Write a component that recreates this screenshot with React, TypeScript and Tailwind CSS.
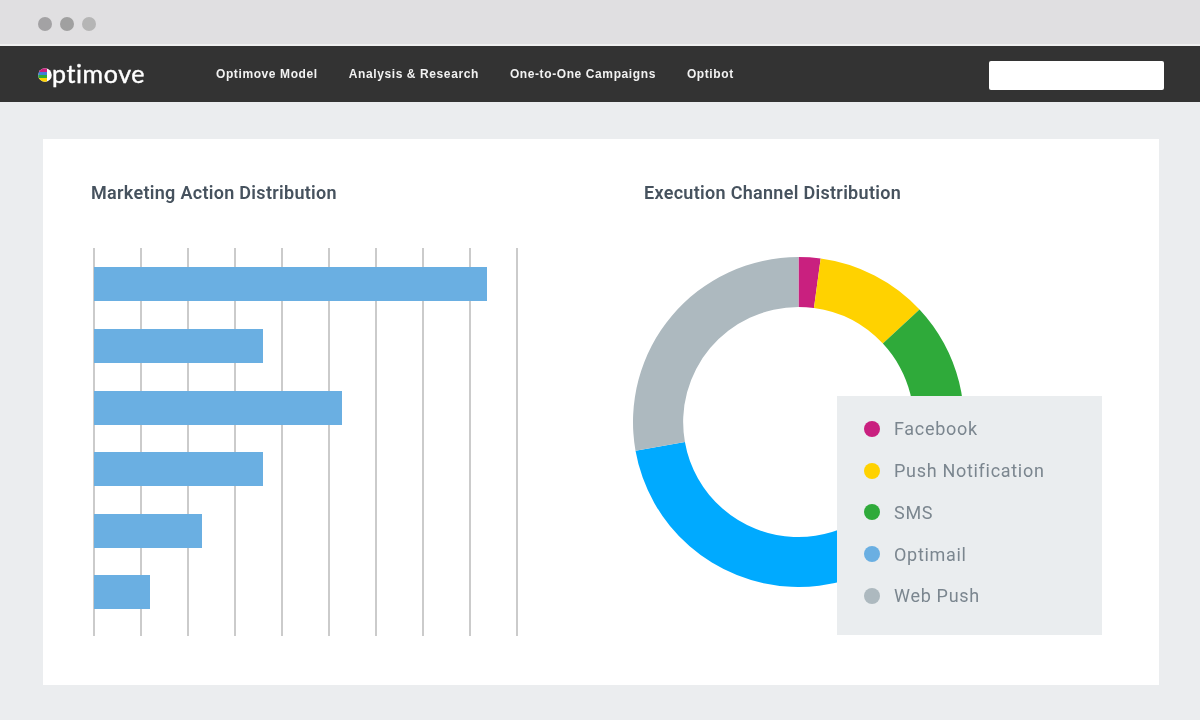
const NAV = ['Optimove Model', 'Analysis & Research', 'One-to-One Campaigns', 'Optibot']

const BARS = [393, 169, 248, 169, 108, 56]

const LEGEND = [
  { label: 'Facebook', color: 'bg-[#c9207f]' },
  { label: 'Push Notification', color: 'bg-[#ffd200]' },
  { label: 'SMS', color: 'bg-[#2faa3a]' },
  { label: 'Optimail', color: 'bg-[#6aafe2]' },
  { label: 'Web Push', color: 'bg-[#adb9bf]' },
]

const SLICES = [
  { from: 0, to: 7.7, fill: '#c9207f' },
  { from: 7.7, to: 47, fill: '#ffd200' },
  { from: 47, to: 105, fill: '#2faa3a' },
  { from: 105, to: 260, fill: '#00aaff' },
  { from: 260, to: 360, fill: '#adb9bf' },
]

function point(r: number, deg: number) {
  const a = (deg * Math.PI) / 180
  return `${165 + r * Math.sin(a)} ${165 - r * Math.cos(a)}`
}

function slicePath(from: number, to: number) {
  const large = to - from > 180 ? 1 : 0
  return `M${point(165, from)} A165 165 0 ${large} 1 ${point(165, to)} L${point(115, to)} A115 115 0 ${large} 0 ${point(115, from)} Z`
}

function Logo() {
  return (
    <div className="flex items-center ml-[38px] w-[178px] text-white">
      <svg width="14" height="14" viewBox="0 0 14 14" className="mt-[1px] shrink-0">
        <defs>
          <clipPath id="logo-o">
            <circle cx="7" cy="7" r="6.8" />
          </clipPath>
        </defs>
        <g clipPath="url(#logo-o)">
          <rect width="14" height="14" fill="#ffffff" />
          <rect width="9" height="4" y="0" fill="#c9207f" />
          <rect width="9" height="3" y="4" fill="#3f7fd8" />
          <rect width="9" height="3" y="7" fill="#2faa3a" />
          <rect width="9" height="4" y="10" fill="#ffd200" />
        </g>
      </svg>
      <span className="text-[25px] leading-none font-['Lato',sans-serif] font-normal tracking-[0.6px] -mt-[1px] [-webkit-text-stroke:0.4px_white]">
        ptimove
      </span>
    </div>
  )
}

function BarChart() {
  return (
    <div className="relative mt-[41px] ml-[2px] w-[425px] h-[388px]">
      <div className="absolute inset-0 flex justify-between">
        {Array.from({ length: 10 }).map((_, i) => (
          <div key={i} className="w-[2px] h-full bg-[#cbcbcb]" />
        ))}
      </div>
      <div className="relative flex flex-col gap-[27.6px] pt-[19.4px] pl-[1px]">
        {BARS.map((w, i) => (
          <div key={i} className="h-[34px] bg-[#6aafe2]" style={{ width: w }} />
        ))}
      </div>
    </div>
  )
}

function Donut() {
  return (
    <svg
      width="331"
      height="330"
      viewBox="0 0 330 330"
      preserveAspectRatio="none"
      className="mt-[50px] -ml-[11px]"
    >
      {SLICES.map((s) => (
        <path key={s.fill} d={slicePath(s.from, s.to)} fill={s.fill} />
      ))}
    </svg>
  )
}

function Legend() {
  return (
    <div className="absolute right-[57px] bottom-[50px] w-[265px] h-[239px] bg-[#eaedef] pl-[27px] pt-[12px] flex flex-col">
      {LEGEND.map((item) => (
        <div key={item.label} className="flex items-center gap-[14px] h-[41.75px]">
          <span className={`w-4 h-4 rounded-full ${item.color}`} />
          <span className="text-[18px] tracking-[0.7px] text-[#7b868f] font-['Roboto',sans-serif]">
            {item.label}
          </span>
        </div>
      ))}
    </div>
  )
}

export default function App() {
  return (
    <div className="w-[1200px] h-[720px] overflow-hidden bg-[#ebedef] blur-[0.5px]">
      <div className="h-[46px] bg-[#e0dfe1] flex items-center gap-2 pl-[38px] pt-[4px] border-b-2 border-[#f0f0f0]">
        <span className="w-[14px] h-[14px] rounded-full bg-[#a3a2a4]" />
        <span className="w-[14px] h-[14px] rounded-full bg-[#a0a0a0]" />
        <span className="w-[14px] h-[14px] rounded-full bg-[#b5b5b5]" />
      </div>
      <div className="h-[56px] bg-[#333333] flex items-center">
        <Logo />
        <nav className="flex gap-[31px] font-['Liberation_Sans',sans-serif] font-bold text-[12px] tracking-[0.6px] text-[#f2f2f2]">
          {NAV.map((item) => (
            <span key={item}>{item}</span>
          ))}
        </nav>
        <div className="ml-auto mr-[36px] mt-[2px] w-[175px] h-[29px] rounded-[2px] bg-white" />
      </div>
      <div className="relative ml-[43px] mt-[37px] w-[1116px] h-[546px] bg-white flex pt-[40px] pl-[48px]">
        <div className="w-[553px]">
          <h2 className="text-[18px] leading-7 font-semibold tracking-[0.3px] text-[#46525e] font-['Roboto',sans-serif]">
            Marketing Action Distribution
          </h2>
          <BarChart />
        </div>
        <div>
          <h2 className="text-[18px] leading-7 font-semibold tracking-[0.3px] text-[#46525e] font-['Roboto',sans-serif]">
            Execution Channel Distribution
          </h2>
          <Donut />
        </div>
        <Legend />
      </div>
    </div>
  )
}
